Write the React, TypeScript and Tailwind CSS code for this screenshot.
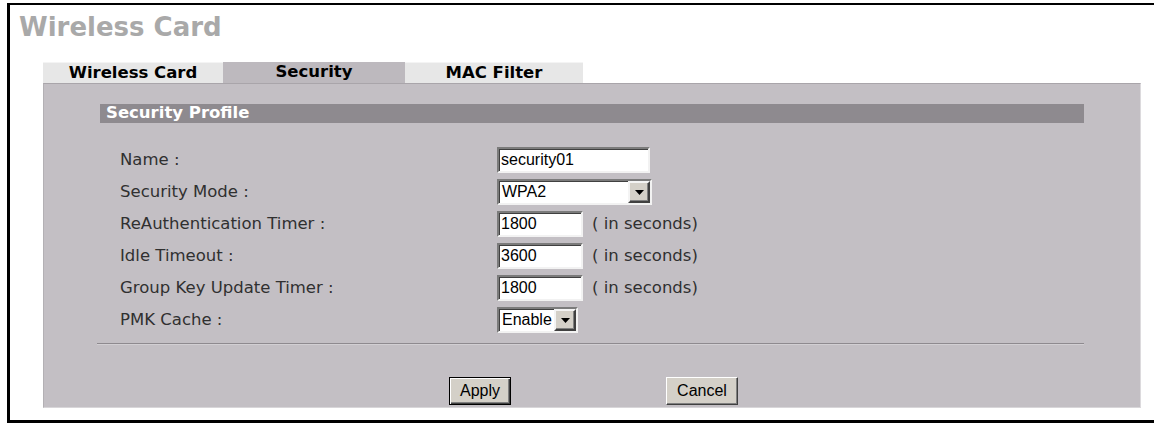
import React from 'react';

// Old-style router web config page: "Wireless Card" > Security tab

const verdana = "font-['DejaVu_Sans',Verdana,sans-serif]";
const arial = "font-['Liberation_Sans',Arial,sans-serif]";

const insetBox =
    'border-2 border-t-[#7b7b7b] border-l-[#7b7b7b] border-b-[#f2f2f2] border-r-[#f2f2f2] shadow-[inset_1px_1px_0_#404040] bg-white';

const TextBox: React.FC<{ value: string; width: string }> = ({ value, width }) => (
    <input
        type="text"
        defaultValue={value}
        className={`${insetBox} ${width} h-[26px] pl-[2px] text-[16px] text-black outline-none ${arial}`}
    />
);

const ComboBox: React.FC<{ value: string; width: string }> = ({ value, width }) => (
    <div className={`${insetBox} ${width} h-[26px] flex items-stretch`}>
        <div className={`flex-1 flex items-center pl-[3px] text-[16px] text-black ${arial}`}>{value}</div>
        <div className="w-[22px] bg-[#d4d0c8] border-2 border-t-[#f4f4f4] border-l-[#f4f4f4] border-b-[#404040] border-r-[#404040] shadow-[inset_-1px_-1px_0_#808080] flex items-center justify-center">
            <svg width="9" height="5" viewBox="0 0 9 5">
                <path d="M0 0 H9 L4.5 5 Z" fill="#000" />
            </svg>
        </div>
    </div>
);

const Row: React.FC<{ label: string; children: React.ReactNode }> = ({ label, children }) => (
    <div className="h-[32px] flex items-center">
        <div className={`w-[397px] pl-[20px] text-[16.5px] text-[#303030] ${verdana}`}>{label}</div>
        <div className="flex items-center">{children}</div>
    </div>
);

const Seconds: React.FC = () => (
    <span className={`ml-[9px] text-[16.5px] text-[#303030] ${verdana}`}>( in seconds)</span>
);

const tabs = [
    { name: 'Wireless Card', width: 'w-[180px]', active: false },
    { name: 'Security', width: 'w-[182px]', active: true },
    { name: 'MAC Filter', width: 'w-[178px]', active: false },
];

export default function App() {
    return (
        <div className="w-[1154px] h-[426px] bg-white overflow-hidden">
            <div className="ml-[7px] mt-[3px] h-[420px] border-t-2 border-l-[3px] border-b-[3px] border-black">
                <div className={`h-[44px] leading-[44px] pl-[9px] text-[26px] font-bold text-[#a9a9a9] ${verdana}`}>
                    Wireless Card
                </div>

                <div className="mt-[13px] ml-[33px] flex h-[21px]">
                    {tabs.map(t => (
                        <div
                            key={t.name}
                            className={`${t.width} flex items-center justify-center text-[16.5px] font-bold text-black ${verdana} ${
                                t.active ? 'bg-[#bdb9be]' : 'bg-[#e7e7e7] border-t border-[#f4f4f4]'
                            }`}
                        >
                            {t.name}
                        </div>
                    ))}
                </div>

                <div className="ml-[33px] w-[1098px] h-[325px] bg-[#c3bfc4] border-t border-t-[#a9a5aa] border-l border-l-[#b3b0b4] border-r border-r-[#dcdadd] border-b border-b-[#d8d6d9]">
                    <div className="pt-[20px] ml-[56px]">
                        <div className={`w-[984px] h-[19px] bg-[#8e8a8f] flex items-center pl-[6px] text-[16.5px] font-bold text-white ${verdana}`}>
                            Security Profile
                        </div>

                        <div className="mt-[21px]">
                            <Row label="Name :">
                                <TextBox value="security01" width="w-[153px]" />
                            </Row>
                            <Row label="Security Mode :">
                                <ComboBox value="WPA2" width="w-[155px]" />
                            </Row>
                            <Row label="ReAuthentication Timer :">
                                <TextBox value="1800" width="w-[86px]" />
                                <Seconds />
                            </Row>
                            <Row label="Idle Timeout :">
                                <TextBox value="3600" width="w-[86px]" />
                                <Seconds />
                            </Row>
                            <Row label="Group Key Update Timer :">
                                <TextBox value="1800" width="w-[86px]" />
                                <Seconds />
                            </Row>
                            <Row label="PMK Cache :">
                                <ComboBox value="Enable" width="w-[81px]" />
                            </Row>
                        </div>
                    </div>

                    <div className="mt-[7px] ml-[53px] w-[987px] border-t border-t-[#8e8a8f] border-b border-b-[#d2cfd3]" />

                    <div className="mt-[32px] ml-[405px] flex">
                        <button className={`w-[62px] h-[28px] bg-[#d4d0c8] border border-black shadow-[inset_1px_1px_0_#ffffff,inset_-1px_-1px_0_#404040,inset_-2px_-2px_0_#808080] text-[16px] text-black ${arial}`}>
                            Apply
                        </button>
                        <button className={`ml-[155px] w-[72px] h-[28px] bg-[#d4d0c8] border border-t-[#ffffff] border-l-[#ffffff] border-b-[#404040] border-r-[#404040] shadow-[inset_-1px_-1px_0_#808080] text-[16px] text-black ${arial}`}>
                            Cancel
                        </button>
                    </div>
                </div>
            </div>
        </div>
    );
}
